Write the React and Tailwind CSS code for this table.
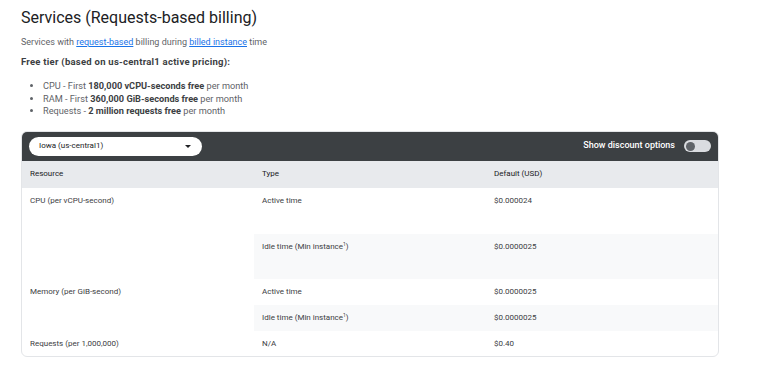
import React from "react";

// Pricing rows for the request-based billing table
const ROWS = [
  { resource: "CPU (per vCPU-second)", items: [
    { type: "Active time", price: "$0.000024", h: "h-[46px]" },
    { type: "Idle time (Min instance", sup: true, price: "$0.0000025", h: "h-[45px]" },
  ] },
  { resource: "Memory (per GiB-second)", items: [
    { type: "Active time", price: "$0.0000025", h: "h-[26px]" },
    { type: "Idle time (Min instance", sup: true, price: "$0.0000025", h: "h-[26px]" },
  ] },
  { resource: "Requests (per 1,000,000)", items: [
    { type: "N/A", price: "$0.40", h: "h-[25px]" },
  ] },
];

function Toggle() {
  return (
    <div className="w-[27px] h-[12px] rounded-full bg-[#dadce0] flex items-center px-[2px]">
      <div className="w-[9px] h-[9px] rounded-full bg-[#5f6368]" />
    </div>
  );
}

export default function App() {
  return (
    <div className="w-[758px] h-[366px] bg-white overflow-hidden font-['Roboto',sans-serif] text-[#202124]">
      <div className="pl-[21px] pt-[8px]">
        <h1 className="text-[16px] leading-[20px] font-normal text-[#202124]">Services (Requests-based billing)</h1>

        <p className="mt-[7px] text-[9px] leading-[14px] text-[#5f6368]">
          Services with <a className="text-[#1a73e8] underline">request-based</a> billing during{" "}
          <a className="text-[#1a73e8] underline">billed instance</a> time
        </p>

        <p className="mt-[6px] text-[9.5px] leading-[14px] tracking-[0.25px] font-bold text-[#3c4043]">
          Free tier (based on us-central1 active pricing):
        </p>

        <ul className="mt-[11px] text-[9.2px] leading-[12.5px] text-[#5f6368] list-disc pl-[22px]">
          <li>CPU - First <b className="text-[#3c4043]">180,000 vCPU-seconds free</b> per month</li>
          <li>RAM - First <b className="text-[#3c4043]">360,000 GiB-seconds free</b> per month</li>
          <li>Requests - <b className="text-[#3c4043]">2 million requests free</b> per month</li>
        </ul>

        {/* Pricing card */}
        <div className="mt-[13px] w-[698px] rounded-[6px] border border-[#e3e5e8] overflow-hidden text-[#3c4043]">
          <div className="h-[29px] bg-[#3c4043] flex items-center justify-between pl-[7px] pr-[7px]">
            <div className="w-[173px] h-[19px] bg-white rounded-full flex items-center justify-between pl-[10px] pr-[11px]">
              <span className="text-[8px] text-[#202124]">Iowa (us-central1)</span>
              <svg width="6" height="3" viewBox="0 0 6 3"><path d="M0 0h6L3 3z" fill="#202124" /></svg>
            </div>
            <div className="flex items-center gap-[9px]">
              <span className="text-[9px] font-medium text-white">Show discount options</span>
              <Toggle />
            </div>
          </div>

          <div className="grid grid-cols-3 h-[27px] bg-[#e8eaed] text-[8px] items-center text-[#202124]">
            <div className="pl-[8px]">Resource</div>
            <div className="pl-[8px]">Type</div>
            <div className="pl-[8px]">Default (USD)</div>
          </div>

          {ROWS.map((r) => (
            <div key={r.resource} className="grid grid-cols-3 text-[8px] leading-[10px]">
              <div className="pl-[8px] pt-[8px]">{r.resource}</div>
              <div className="col-span-2 flex flex-col">
                {r.items.map((it, i) => (
                  <div key={i} className={`grid grid-cols-2 ${it.h} ${i === 1 ? "bg-[#f8f9fa]" : ""}`}>
                    <div className="pl-[8px] pt-[8px]">
                      {it.type}
                      {it.sup && <sup className="text-[5px]">1</sup>}
                      {it.sup && ")"}
                    </div>
                    <div className="pl-[8px] pt-[8px]">{it.price}</div>
                  </div>
                ))}
              </div>
            </div>
          ))}
        </div>
      </div>
    </div>
  );
}
